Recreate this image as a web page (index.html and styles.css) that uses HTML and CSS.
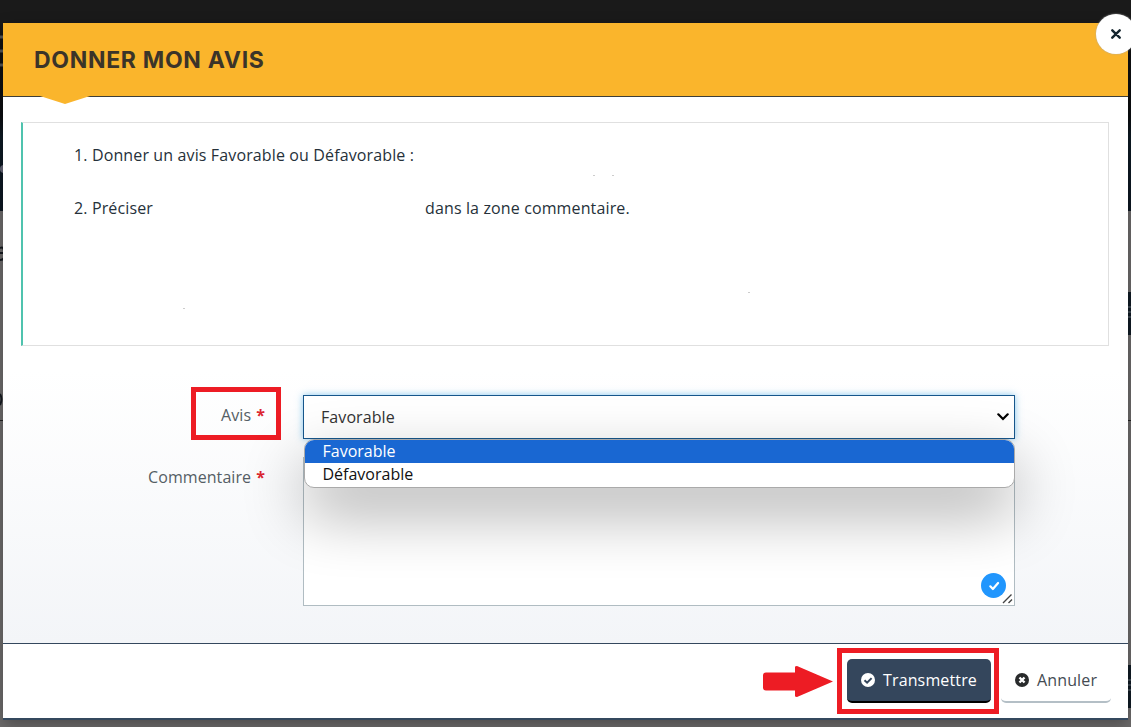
FILE: index.html
```html
<!DOCTYPE html>
<html lang="fr">
<head>
<meta charset="utf-8">
<title>Donner mon avis</title>
<link rel="stylesheet" href="styles.css">
</head>
<body>
<svg class="backdrop" width="1131" height="727" viewBox="0 0 1131 727" aria-hidden="true">
  <defs><linearGradient id="sky" x1="0" y1="0" x2="0" y2="1"><stop offset="0" stop-color="#1a1a1a"/><stop offset=".1" stop-color="#1a1a1a"/><stop offset=".2" stop-color="#111"/><stop offset=".55" stop-color="#0b0d10"/><stop offset=".65" stop-color="#0d1a24"/><stop offset="1" stop-color="#0d1722"/></linearGradient></defs>
  <rect width="1131" height="727" fill="#6e6c6c"/>
  <rect width="1131" height="211" fill="url(#sky)"/>
  <path d="M0 37h3M0 51h3M0 65h3" stroke="#555" stroke-width="3"/>
  <circle cx="4" cy="169" r="4" fill="#667"/>
  <path d="M0 248q4-2 4 4M0 253h4M0 260q3 0 4-2M0 394q3 5 0 11" stroke="#151a20" stroke-width="2" fill="none"/>
  <path d="M0 420.500h3M1128 420.500h3" stroke="#222"/>
  <path d="M1128 292h3v43h-3zM1128 665h3v43h-3z" fill="#101b25"/>
  <path d="M1128 307h3M1128 312h3M1128 317h3M1128 680h3M1128 685h3M1128 690h3" stroke="#65717b"/>
</svg>
<main class="modal">
  <header class="modal-header">
    <h1>DONNER MON AVIS</h1>
    <svg class="pointer" width="50" height="8" viewBox="0 0 50 8"><path d="M0 0h50L25 8z" fill="#fab52c"/></svg>
    <button class="close" aria-label="Fermer"><svg width="10" height="10" viewBox="0 0 10 10"><path d="M1.300 1.300l7.400 7.400M8.700 1.300l-7.400 7.400" stroke="#14252e" stroke-width="2.400" stroke-linecap="round"/></svg></button>
  </header>
  <section class="modal-body">
    <div class="notice">
      <p>1. Donner un avis Favorable ou Défavorable :</p>
      <p class="split"><span>2. Préciser</span><span>dans la zone commentaire.</span></p>
      <svg class="specks" width="600" height="140" viewBox="0 0 600 140"><path d="M410 2.500h2M429 2.500h2M565 119.500h2M0 135.500h2" stroke="#ccc"/></svg>
    </div>
    <form class="form">
      <div class="label"><span class="marked">Avis <b>*</b></span></div>
      <div class="select">
        <span>Favorable</span>
        <svg width="12" height="8" viewBox="0 0 12 8"><path d="M1.300 1.300L6 6l4.700-4.700" fill="none" stroke="#000" stroke-width="2.200" stroke-linecap="round"/></svg>
        <ul class="options"><li class="active">Favorable</li><li>Défavorable</li></ul>
      </div>
      <div class="label label-comment">Commentaire <b>*</b></div>
      <div class="textarea">
        <svg class="check" width="25" height="25" viewBox="0 0 25 25"><circle cx="12.500" cy="12.500" r="12.500" fill="#2196fd"/><path d="M9.300 13.300l2.600 2.700 5.200-6" fill="none" stroke="#fff" stroke-width="2.200" stroke-linecap="round" stroke-linejoin="round"/></svg>
        <svg class="grip" width="11" height="11" viewBox="0 0 11 11"><path d="M1 10l8.500-8.500M6.500 10l3.500-3.500" stroke="#444" stroke-width="1.400"/></svg>
      </div>
    </form>
  </section>
  <footer class="modal-footer">
    <svg class="arrow" width="70" height="32" viewBox="0 0 70 32"><path d="M3 6.500h29V1q0-1 2-1l36 15.500L34 31q-2 0-2-1v-5.500H3q-3 0-3-3v-12q0-3 3-3z" fill="#ed1c24"/></svg>
    <div class="highlight">
      <button class="btn primary"><svg width="14" height="14" viewBox="0 0 14 14"><circle cx="7" cy="7" r="7" fill="#fff"/><path d="M3.500 7.200l2.600 2.500 4.500-4.600" fill="none" stroke="#34465c" stroke-width="2"/></svg><span>Transmettre</span></button>
    </div>
    <button class="btn secondary"><svg width="14" height="14" viewBox="0 0 14 14"><circle cx="7" cy="7" r="7" fill="#292b2c"/><path d="M4.500 4.500l5 5M9.500 4.500l-5 5" stroke="#fff" stroke-width="2.400"/></svg><span>Annuler</span></button>
  </footer>
</main>
</body>
</html>
```
FILE: styles.css
```css
* { box-sizing: border-box; }
body { margin: 0; width: 1131px; height: 727px; overflow: hidden; padding: 23px 3px 0; font: 16px/24px "Open Sans", sans-serif; color: #26313a; }
svg { display: block; flex: none; }
button { font: inherit; border: 0; padding: 0; }
h1, p, ul { margin: 0; padding: 0; }
.backdrop { position: absolute; left: 0; top: 0; z-index: -1; }
.modal { width: 1125px; height: 697px; background: #fff; border-bottom: 2px solid #34485e; box-shadow: 0 5px 15px rgba(0,0,0,.3); display: flex; flex-direction: column; }
.modal-header { position: relative; height: 74px; flex: none; background: #fab52c; border-bottom: 1px solid #3e3e38; padding: 22px 31px; }
.modal-header h1 { font: 700 23px/30px Inter, sans-serif; color: #3b3429; letter-spacing: .7px; white-space: nowrap; }
.pointer { position: absolute; left: 37px; top: 73px; }
.close { position: absolute; left: 1093px; top: -9px; width: 40px; height: 40px; border-radius: 50%; background: #fff; box-shadow: 0 0 2px #aaa; display: grid; place-items: center; }
.modal-body { height: 547px; flex: none; padding: 25px 19px 0 18px; background: linear-gradient(#fff 50%, #f3f5f8); border-bottom: 1px solid #34485e; }
.notice { height: 224px; border: 1px solid #e0e0e0; border-left: 2px solid #4fc3ae; background: #fff; padding: 20px 0 0 51px; letter-spacing: .13px; }
.notice p + p { margin-top: 29px; }
.split { display: grid; grid-template-columns: 351px 1fr; }
.specks { margin: -47px 0 0 109px; }
.form { display: grid; grid-template-columns: 260px 712px; grid-template-rows: 44px 149px; column-gap: 22px; row-gap: 18px; margin-top: 49px; color: #555e65; }
.label { display: flex; justify-content: flex-end; gap: 5px; padding-right: 16px; line-height: 24px; letter-spacing: .08px; }
.label b { color: #dc2731; font-weight: 700; }
.label-comment { padding-top: 8px; }
.marked { display: flex; justify-content: flex-end; gap: 5px; width: 90px; height: 53px; border: 5px solid #ed1c24; margin: -8px -16px 0 0; padding: 11px 11px 0 0; }
.select { position: relative; height: 44px; border: 1px solid #17578c; background: #fff; box-shadow: 0 0 7px rgba(70,170,230,.65); padding: 0 5px 0 17px; display: flex; align-items: center; justify-content: space-between; color: #333; letter-spacing: .08px; }
.options { position: absolute; z-index: 1; top: 43px; left: 0; width: 711px; height: 49px; list-style: none; background: #fff; border: 1px solid #aaa; border-radius: 10px; overflow: hidden; box-shadow: 0 25px 62px rgba(0,0,0,.33); color: #111; letter-spacing: 0; }
.options li { height: 24px; line-height: 23px; padding-left: 17.500px; }
.options .active { height: 23px; background: #1967d2; color: #fff; }
.textarea { height: 149px; border: 1px solid #b0bcc2; background: #fff; display: flex; align-items: flex-end; justify-content: flex-end; padding: 0 1px 1px 0; }
.check { margin: 0 -4px 6px 0; }
.modal-footer { display: flex; height: 74px; padding: 4px 17px 0 0; justify-content: flex-end; }
.arrow { margin: 18px 4px 0 0; }
.highlight { width: 162px; height: 66px; border: 5px solid #ed1c24; padding: 6px 5px; }
.btn { display: flex; align-items: center; height: 44px; gap: 8px; letter-spacing: .14px; border-radius: 5px; }
.primary { width: 144px; background: #34465c; border-bottom: 2px solid #000; color: #fff; padding-left: 14px; }
.secondary { width: 110px; margin: 11px 0 0 2px; background: #fff; border-bottom: 2px solid #b4bfc6; color: #444b52; padding-left: 14px; }
```
